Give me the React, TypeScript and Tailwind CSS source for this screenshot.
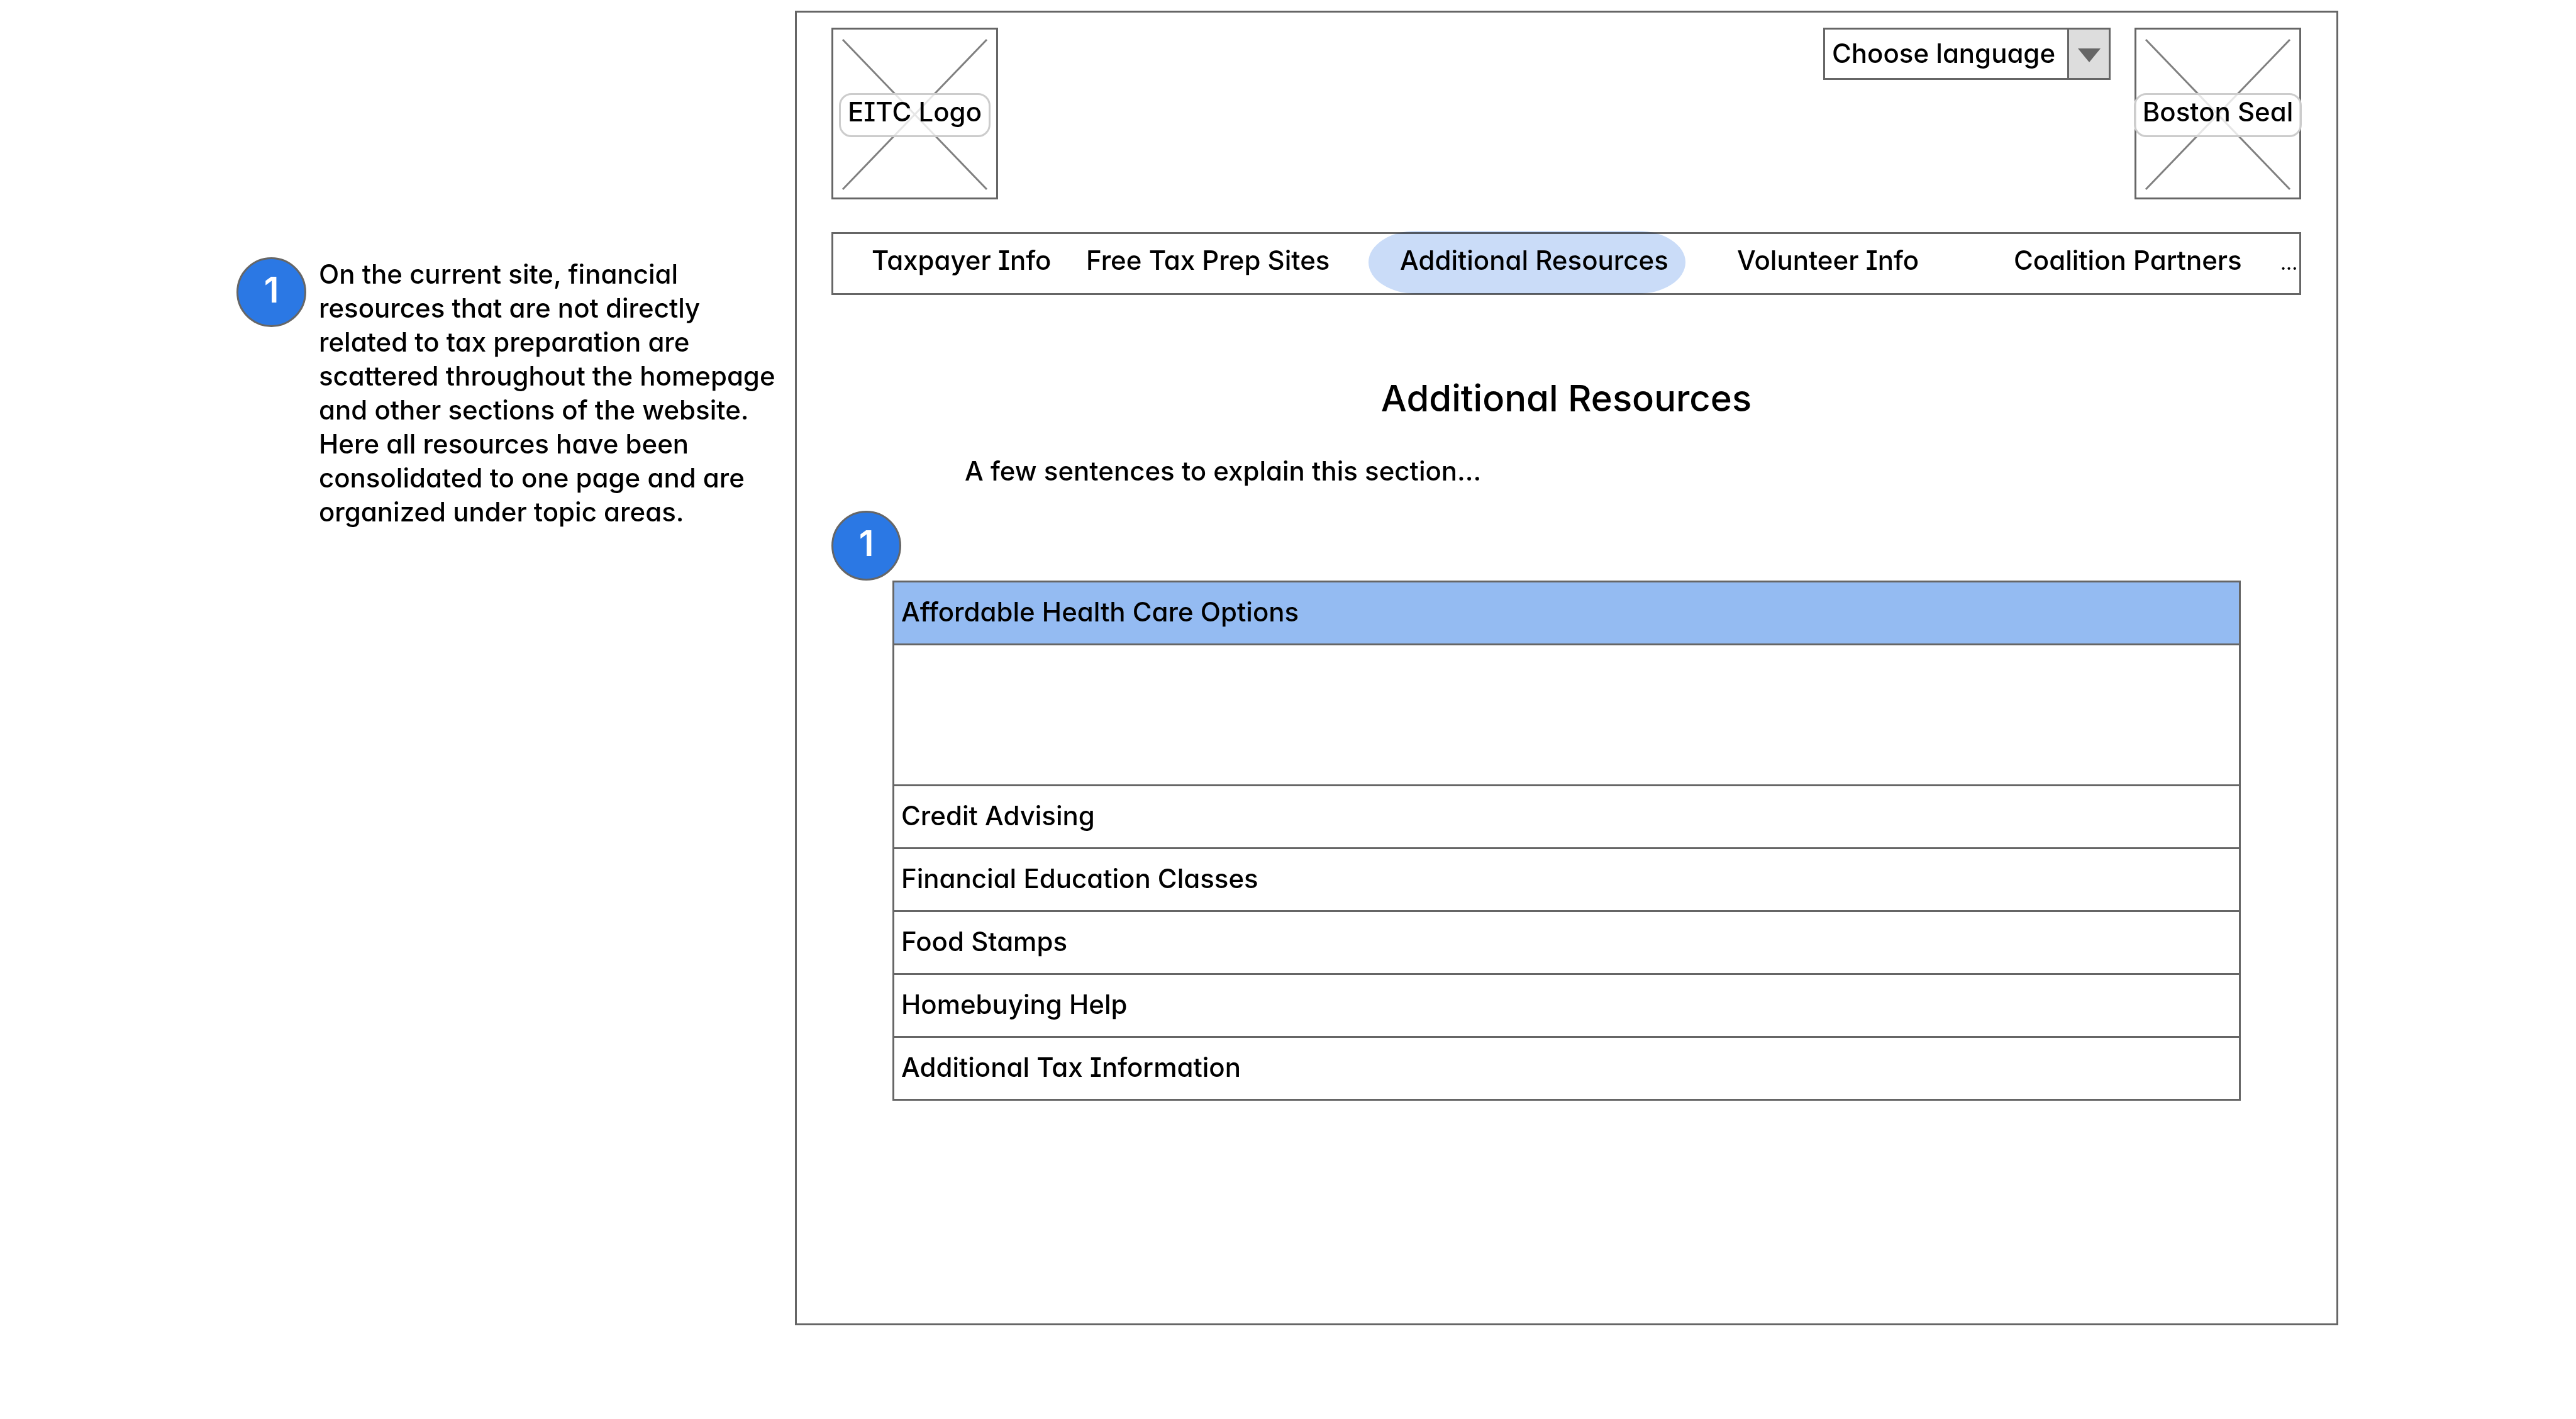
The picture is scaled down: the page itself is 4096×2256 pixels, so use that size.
import { useState } from "react";

const notes = [
  "On the current site, financial",
  "resources that are not directly",
  "related to tax preparation are",
  "scattered throughout the homepage",
  "and other sections of the website.",
  "Here all resources have been",
  "consolidated to one page and are",
  "organized under topic areas.",
];

const navItems = [
  "Taxpayer Info",
  "Free Tax Prep Sites",
  "Additional Resources",
  "Volunteer Info",
  "Coalition Partners",
];

const topics = [
  "Affordable Health Care Options",
  "Credit Advising",
  "Financial Education Classes",
  "Food Stamps",
  "Homebuying Help",
  "Additional Tax Information",
];

function Badge() {
  return (
    <span className="flex h-[111px] w-[111px] shrink-0 items-center justify-center rounded-full border-3 border-[#666] bg-[#2b78e4] pb-2 text-[56px] leading-[72px] font-semibold text-white">
      1
    </span>
  );
}

function ImagePlaceholder({ label }: { label: string }) {
  return (
    <div className="relative flex h-[273px] w-[265px] shrink-0 items-center justify-center border-3 border-[#666] pt-1">
      <svg
        className="absolute inset-0 h-full w-full"
        viewBox="0 0 259 267"
        fill="none"
        stroke="#808080"
        strokeWidth="3"
        aria-hidden="true"
      >
        <path d="M15 16 L244 254 M244 16 L15 254" />
      </svg>
      <span className="relative shrink-0 rounded-[20px] border-3 border-[#ccc] bg-white/80 px-[11px] pb-[10px] whitespace-nowrap">
        {label}
      </span>
    </div>
  );
}

export default function App() {
  const [open, setOpen] = useState(0);

  return (
    <div className="flex min-h-screen items-start bg-white pt-[17px] pr-[378px] pl-[376px] font-[Inter,sans-serif] text-[42px] leading-[54px] font-medium text-black [font-feature-settings:'cv11','cv08']">
      <aside className="flex w-[888px] shrink-0 items-start gap-[20px] pt-[392px]">
        <Badge />
        <p>
          {notes.map((line) => (
            <span key={line} className="block whitespace-nowrap">
              {line}
            </span>
          ))}
        </p>
      </aside>

      <main className="min-w-0 flex-1 border-3 border-[#666] pt-6 pr-[56px] pb-[354px] pl-[55px]">
        <header className="flex items-start">
          <ImagePlaceholder label="EITC Logo" />
          <div className="relative mr-[38px] ml-auto flex border-3 border-[#666]">
            <select
              aria-label="Choose language"
              className="h-[77px] w-[451px] appearance-none bg-white pr-[70px] pb-[2px] pl-[11px] outline-none"
            >
              <option>Choose language</option>
            </select>
            <span className="pointer-events-none absolute inset-y-0 right-0 flex w-[66px] items-center justify-center border-l-3 border-[#666] bg-[#ddd]">
              <svg className="mt-1 w-[36px]" viewBox="0 0 36 22" fill="#666" aria-hidden="true">
                <path d="M0 0 H36 L18 22 Z" />
              </svg>
            </span>
          </div>
          <ImagePlaceholder label="Boston Seal" />
        </header>

        <nav className="mt-[52px] grid h-[100px] grid-cols-[341fr_499fr_536fr_440fr_424fr_30fr] content-center items-baseline border-3 border-[#666] pb-[6px] pl-[61px]">
          {navItems.map((item) => (
            <a key={item} href="#" className="relative min-w-0 justify-self-start whitespace-nowrap">
              {item}
              {item === "Additional Resources" && (
                <span className="absolute -top-[20px] -bottom-[26px] -left-[50px] w-[504px] rounded-[76px/50px] bg-[#cadcf8] mix-blend-multiply" />
              )}
            </a>
          ))}
          <a href="#" aria-label="More" className="min-w-0 justify-self-start text-[30px]">
            ...
          </a>
        </nav>

        <h1 className="mt-32 text-center text-[58px] leading-[72px] font-medium">
          Additional Resources
        </h1>
        <p className="mt-[53px] pl-[212px]">A few sentences to explain this section...</p>

        <div className="mt-9">
          <Badge />
        </div>

        <div className="mr-[96px] ml-[97px] border-3 border-b-0 border-[#666]">
          {topics.map((topic, i) => (
            <section key={topic}>
              <button
                type="button"
                aria-expanded={open === i}
                onClick={() => setOpen(i)}
                className={
                  open === i
                    ? "block h-[100px] w-full border-b-3 border-[#666] bg-[#94bbf2] px-[11px] pb-1 text-left"
                    : "block h-[100px] w-full border-b-3 border-[#666] bg-white px-[11px] pb-1 text-left"
                }
              >
                {topic}
              </button>
              {open === i && <div className="h-[224px] border-b-3 border-[#666]" />}
            </section>
          ))}
        </div>
      </main>
    </div>
  );
}
